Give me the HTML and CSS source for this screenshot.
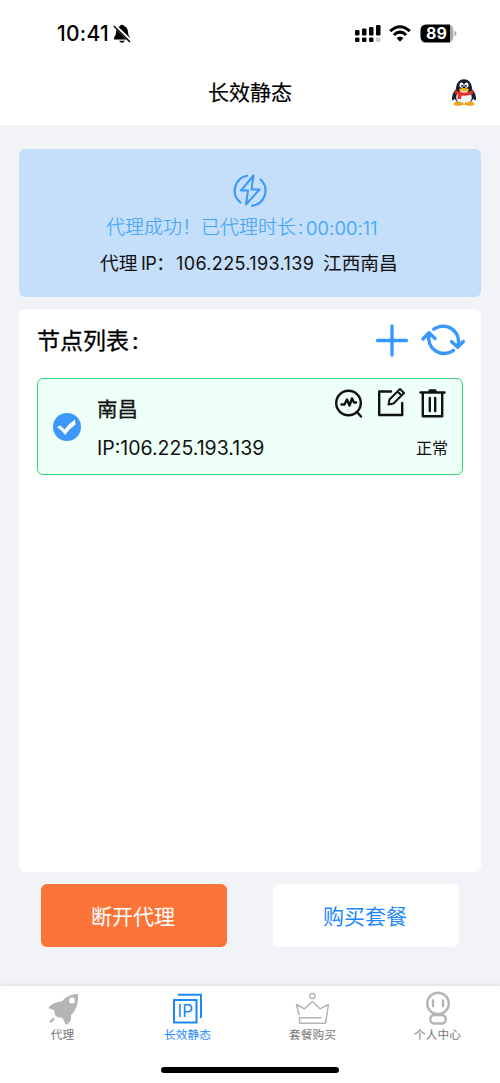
FILE: index.html
```html
<!DOCTYPE html>
<html lang="zh-CN">
<head>
<meta charset="utf-8">
<title>长效静态</title>
<link rel="stylesheet" href="styles.css">
</head>
<body>
<div class="app">
  <header class="status">
    <span class="clock">10:41</span>
    <svg class="bell" viewBox="112 24 20 20"><path d="M114 39.500V37.500Q116 36 116 32Q116.500 27 119.800 26.300Q120 24.800 122 24.800T124.200 26.300Q127.500 27 128 32Q128 36 130 37.500V39.500ZM119 40.800H125Q122 44.500 119 40.800Z"/><path d="M114.500 25.500 131 41.500" stroke="#fff" stroke-width="3.600"/><path d="M113.800 26 130 42" stroke="#000" stroke-width="1.500"/></svg>
    <svg class="signals" viewBox="354 24 104 20">
      <g><rect x="355" y="30" width="4.500" height="5.500" rx="1.300"/><rect x="362" y="28.500" width="4.500" height="7" rx="1.300"/><rect x="369" y="27" width="4.500" height="8.500" rx="1.300"/><rect x="376" y="25" width="4.500" height="10.500" rx="1.300"/><rect x="355" y="37.500" width="4.500" height="4.500" rx="1.300"/><rect x="362" y="37.500" width="4.500" height="4.500" rx="1.300"/><rect x="369" y="37.500" width="4.500" height="4.500" rx="1.300"/><rect x="376" y="37.500" width="4.500" height="4.500" rx="1.300" fill="#ccc"/></g>
      <path d="M390.200 31.200Q400 22.200 409.800 31.200M393.800 35Q400 29.300 406.200 35" fill="none" stroke="#000" stroke-width="3"/><path d="M396.500 38Q400 35 403.500 38L400 41.800Z"/>
      <path d="M426 25H450Q453.500 25 453.500 33.500T450 42H426Z" fill="#aaa"/><path d="M426 24.500H450V42.500H426Q420.500 42.500 420.500 36.500V30.500Q420.500 24.500 426 24.500Z"/><path d="M454.500 31Q456.500 31 456.500 33.500T454.500 36Z" fill="#aaa"/>
      <text class="battery" x="436.500" y="39.300">89</text>
    </svg>
  </header>
  <nav class="titlebar">
    <h1 class="title">长效静态</h1>
    <svg class="penguin" viewBox="451 77 26 29">
      <path d="M456 88Q451.500 93 452 99Q454 100 456 95ZM472 88Q476.500 93 476 99Q474 100 472 95Z" fill="#18202d"/>
      <ellipse cx="464" cy="94" rx="10" ry="9.500" fill="#18202d"/><ellipse cx="464" cy="86.800" rx="8" ry="8.500" fill="#151c29"/>
      <ellipse cx="464" cy="96.500" rx="7.800" ry="7" fill="#f1f2f4"/>
      <ellipse cx="458.500" cy="102.700" rx="4.800" ry="2" fill="#f5a51d"/><ellipse cx="469.500" cy="102.700" rx="4.800" ry="2" fill="#f5a51d"/>
      <ellipse cx="461.500" cy="84.200" rx="2.100" ry="2.700" fill="#fff"/><ellipse cx="466.500" cy="84.200" rx="2.100" ry="2.700" fill="#fff"/><circle cx="462" cy="84.800" r=".9"/><circle cx="466" cy="84.800" r=".9"/>
      <ellipse cx="464" cy="88.800" rx="5" ry="1.700" fill="#f8b318"/>
      <path d="M455.500 89Q464 94.500 472.500 89L473.500 92.500Q468 95.500 461.500 94.500L461 98H457.500L458 93.500L454.500 92.500Z" fill="#e5332b"/>
    </svg>
  </nav>
  <main class="content">
    <section class="connection">
      <svg class="bolt" viewBox="232 173 36 36"><path d="M247 175.700A15.200 15.200 0 0 0 240.500 202.500M260.500 179.500A15.200 15.200 0 0 1 252 205.800" class="line ring"/><path d="M253.500 175.500 241 190.500H248L246 204.500 259.500 189.500H251.500Z" class="line thin"/></svg>
      <p class="elapsed"><span class="success">代理成功！</span><span class="duration">已代理时长</span><span class="sep">:</span><span class="timer">00:00:11</span></p>
      <p class="address"><span class="proxy">代理</span><span class="ip">IP：</span><span class="number">106.225.193.139</span><span class="place">江西南昌</span></p>
    </section>
    <section class="nodes">
      <div class="listhead">
        <h2 class="heading">节点列表<span class="colon">:</span></h2>
        <svg class="tools" viewBox="374 322 96 36"><path d="M378.500 340.500H407.500M393 326V355" class="line thick"/><path d="M434.800 329.200A15.500 15.500 0 0 1 458.800 346.500M430 334.500A15.500 15.500 0 0 0 454.500 350.300M424 339 430 332.800 436 338.500M452.500 341.500 458.700 347.300 464.300 341.500" class="line thick"/></svg>
      </div>
      <article class="node">
        <svg class="check" viewBox="52 412 30 30"><circle cx="67" cy="427" r="14" fill="#3c98fa"/><path d="M57 427.500Q59 425 61 426L64.500 429.500Q69 423.500 75 419.500L75.500 424.500Q69.500 428.500 65 435Q61.500 429.500 57 427.500Z" fill="#fff"/></svg>
        <div class="nodeinfo"><h3 class="nodename">南昌</h3><span class="nodeip">IP:106.225.193.139</span></div>
        <div class="nodeside">
          <svg class="actions" viewBox="333 386 114 34"><g class="ink"><circle cx="348.500" cy="403" r="12.300"/><path d="M357 412 361 416.500M341.500 404.500H344.500L347 399.500 349.500 405.500 352 398.500 354 402.500H356"/><path d="M391 391.500H379.200V415H402.200V403"/><path d="M388.500 404.500 389.500 399.500 400 389 404 393 393.500 403.500ZM397.500 391.500 401.500 395.500" stroke-width="2"/><path d="M420.500 392.500H444.500M422.800 393V416.200H442.200V393M429.800 398V411M435.200 398V411"/><path d="M430 391H435" stroke-width="3.500"/></g></svg>
          <span class="state">正常</span>
        </div>
      </article>
    </section>
    <div class="buttons"><button class="button stop">断开代理</button><button class="button buy">购买套餐</button></div>
  </main>
  <footer class="footer">
    <nav class="tabs">
      <a class="tab"><svg class="tabicon" viewBox="44.500 991 36 36"><path d="M77.500 994Q68 993.500 61 1001.500Q53 1001.500 47.500 1008L54 1010.500Q53 1014 56.500 1017L62 1018 65.500 1025Q71.500 1022 70.500 1015Q78.500 1008 77.500 994Z" fill="#b5b5b5"/><circle cx="71.500" cy="1000.500" r="3" fill="#fff"/><path d="M49 1023Q49 1018.500 54 1018Q54 1022 49 1023Z" fill="#b5b5b5"/></svg><span>代理</span></a>
      <a class="tab active"><svg class="tabicon" viewBox="170 991 36 36"><path d="M178 994.800H201V1018" class="line tabline"/><rect x="174" y="1000" width="22.500" height="22.500" class="line tabline"/><text class="ipmark" x="185.300" y="1017.300">IP</text></svg><span>长效静态</span></a>
      <a class="tab"><svg class="tabicon" viewBox="295 991 36 36"><g class="gray"><circle cx="312.500" cy="996" r="2.600"/><path d="M299 1014.500 296.500 1004.500 304.500 1008.800 312.500 1001.500 320 1008.800 328.500 1004.500 325.500 1023.300H299.500V1017.800H321"/></g></svg><span>套餐购买</span></a>
      <a class="tab"><svg class="tabicon" viewBox="419.500 991 36 36"><g class="gray person"><circle cx="437.500" cy="1003.500" r="10.800"/><path d="M432.500 1000.500V1006M442.500 1000.500V1006"/><rect x="429.800" y="1015" width="15.500" height="8.500" rx="4"/></g></svg><span>个人中心</span></a>
    </nav>
    <div class="home"></div>
  </footer>
</div>
</body>
</html>
```
FILE: styles.css
```css
* { box-sizing: border-box; }
body, h1, h2, h3, p { margin: 0; font-weight: 400; }
body { font-family: Inter, "Noto Sans CJK SC", sans-serif; color: #111; background: #f2f3f7; }
svg { display: block; flex: none; }
.app { display: flex; flex-direction: column; height: 1083px; overflow: hidden; }
.status { display: flex; align-items: center; height: 60px; padding: 8px 42px 0 57px; background: #fff; }
.clock { width: 55px; font-size: 21px; line-height: 24px; font-weight: 500; letter-spacing: .3px; color: #000; }
.bell { width: 20px; height: 20px; }
.signals { width: 104px; height: 20px; margin-left: auto; }
.battery { font-size: 16px; font-weight: 700; fill: #fff; text-anchor: middle; }
.titlebar { display: flex; align-items: center; justify-content: center; height: 65px; padding: 0 23px; background: #fff; }
.title { margin-left: 26px; margin-right: auto; padding-left: 159px; font-size: 21px; line-height: 30px; color: #000; -webkit-text-stroke: .2px; }
.penguin { width: 26px; height: 29px; }
.content { flex: 1; padding: 24px 19px 0; }
.connection { display: flex; flex-direction: column; align-items: center; height: 148px; padding-top: 24px; background: #c5def9; border-radius: 6px; }
.bolt { width: 36px; height: 36px; }
.line { fill: none; stroke: #3898fb; stroke-width: 2.4; stroke-linecap: round; stroke-linejoin: round; }
.ring { stroke-width: 2.1; }
.thin { stroke-width: 2; }
.thick { stroke-width: 3.4; }
.elapsed, .address { display: flex; white-space: nowrap; }
.elapsed { width: 272px; margin: 5px 0 0 -16px; font-size: 19px; line-height: 28px; font-weight: 300; color: #42a5fa; -webkit-text-stroke: .2px; }
.success, .duration { width: 95px; }
.sep { width: 10px; padding-left: 2px; }
.timer { font-size: 18.500px; letter-spacing: .1px; }
.address { width: 298px; margin: 8px 0 0 -2px; font-size: 18.700px; line-height: 28px; }
.proxy { width: 41px; }
.ip { width: 35px; font-size: 18px; letter-spacing: -.5px; }
.number { width: 147px; font-size: 18px; letter-spacing: .35px; }
.nodes { height: 563px; margin-top: 12px; padding: 13px 12px 0 18px; background: #fff; border-radius: 6px; }
.listhead { display: flex; justify-content: space-between; height: 56px; }
.heading { padding-top: 1px; font-size: 23px; line-height: 36px; color: #000; -webkit-text-stroke: .3px; }
.colon { padding-left: 3px; }
.tools { width: 96px; height: 36px; }
.node { display: flex; width: 426px; height: 97px; padding: 7px 15px 0 14px; border: 1.500px solid #37d27a; border-radius: 6px; background: #edfff6; }
.check { width: 30px; height: 30px; margin-top: 26px; }
.nodeinfo { display: flex; flex-direction: column; margin-left: 15px; white-space: nowrap; }
.nodename { margin-top: 9px; font-size: 20.500px; line-height: 30px; -webkit-text-stroke: .3px; }
.nodeip { margin-top: 9px; font-size: 19.500px; line-height: 28px; letter-spacing: 0; }
.nodeside { display: flex; flex-direction: column; align-items: flex-end; margin-left: auto; }
.actions { width: 114px; height: 34px; }
.ink { fill: none; stroke: #111; stroke-width: 2.400; stroke-linejoin: round; stroke-linecap: round; }
.state { margin: 16px -1px 0 0; font-size: 16px; line-height: 24px; }
.buttons { display: flex; gap: 46px; margin: 12px 22px 0; }
.button { width: 186px; height: 63px; padding: 2px 2px 0 0; border: 0; border-radius: 6px; font: 400 21px/30px Inter, "Noto Sans CJK SC", sans-serif; }
.stop { background: #fd7439; color: #fff; }
.buy { background: #fff; color: #1d88fb; }
.footer { height: 97px; background: #fff; box-shadow: 0 -1px 4px #d8dbe0; }
.tabs { display: flex; height: 80px; padding-top: 5px; }
.tab { display: flex; flex: 1; flex-direction: column; align-items: center; font-size: 11.700px; line-height: 16px; color: #777; }
.active { color: #1d88fb; }
.tabicon { width: 36px; height: 36px; }
.tabline { stroke: #1d88fb; stroke-width: 2; stroke-linejoin: miter; stroke-linecap: butt; }
.ipmark { font-size: 17px; fill: #1d88fb; text-anchor: middle; }
.gray { fill: none; stroke: #b5b5b5; stroke-width: 1.500; stroke-linejoin: round; stroke-linecap: round; }
.person { stroke-width: 2.400; }
.home { width: 178px; height: 6px; margin: 1px auto 0; border-radius: 3px; background: #000; }
```
